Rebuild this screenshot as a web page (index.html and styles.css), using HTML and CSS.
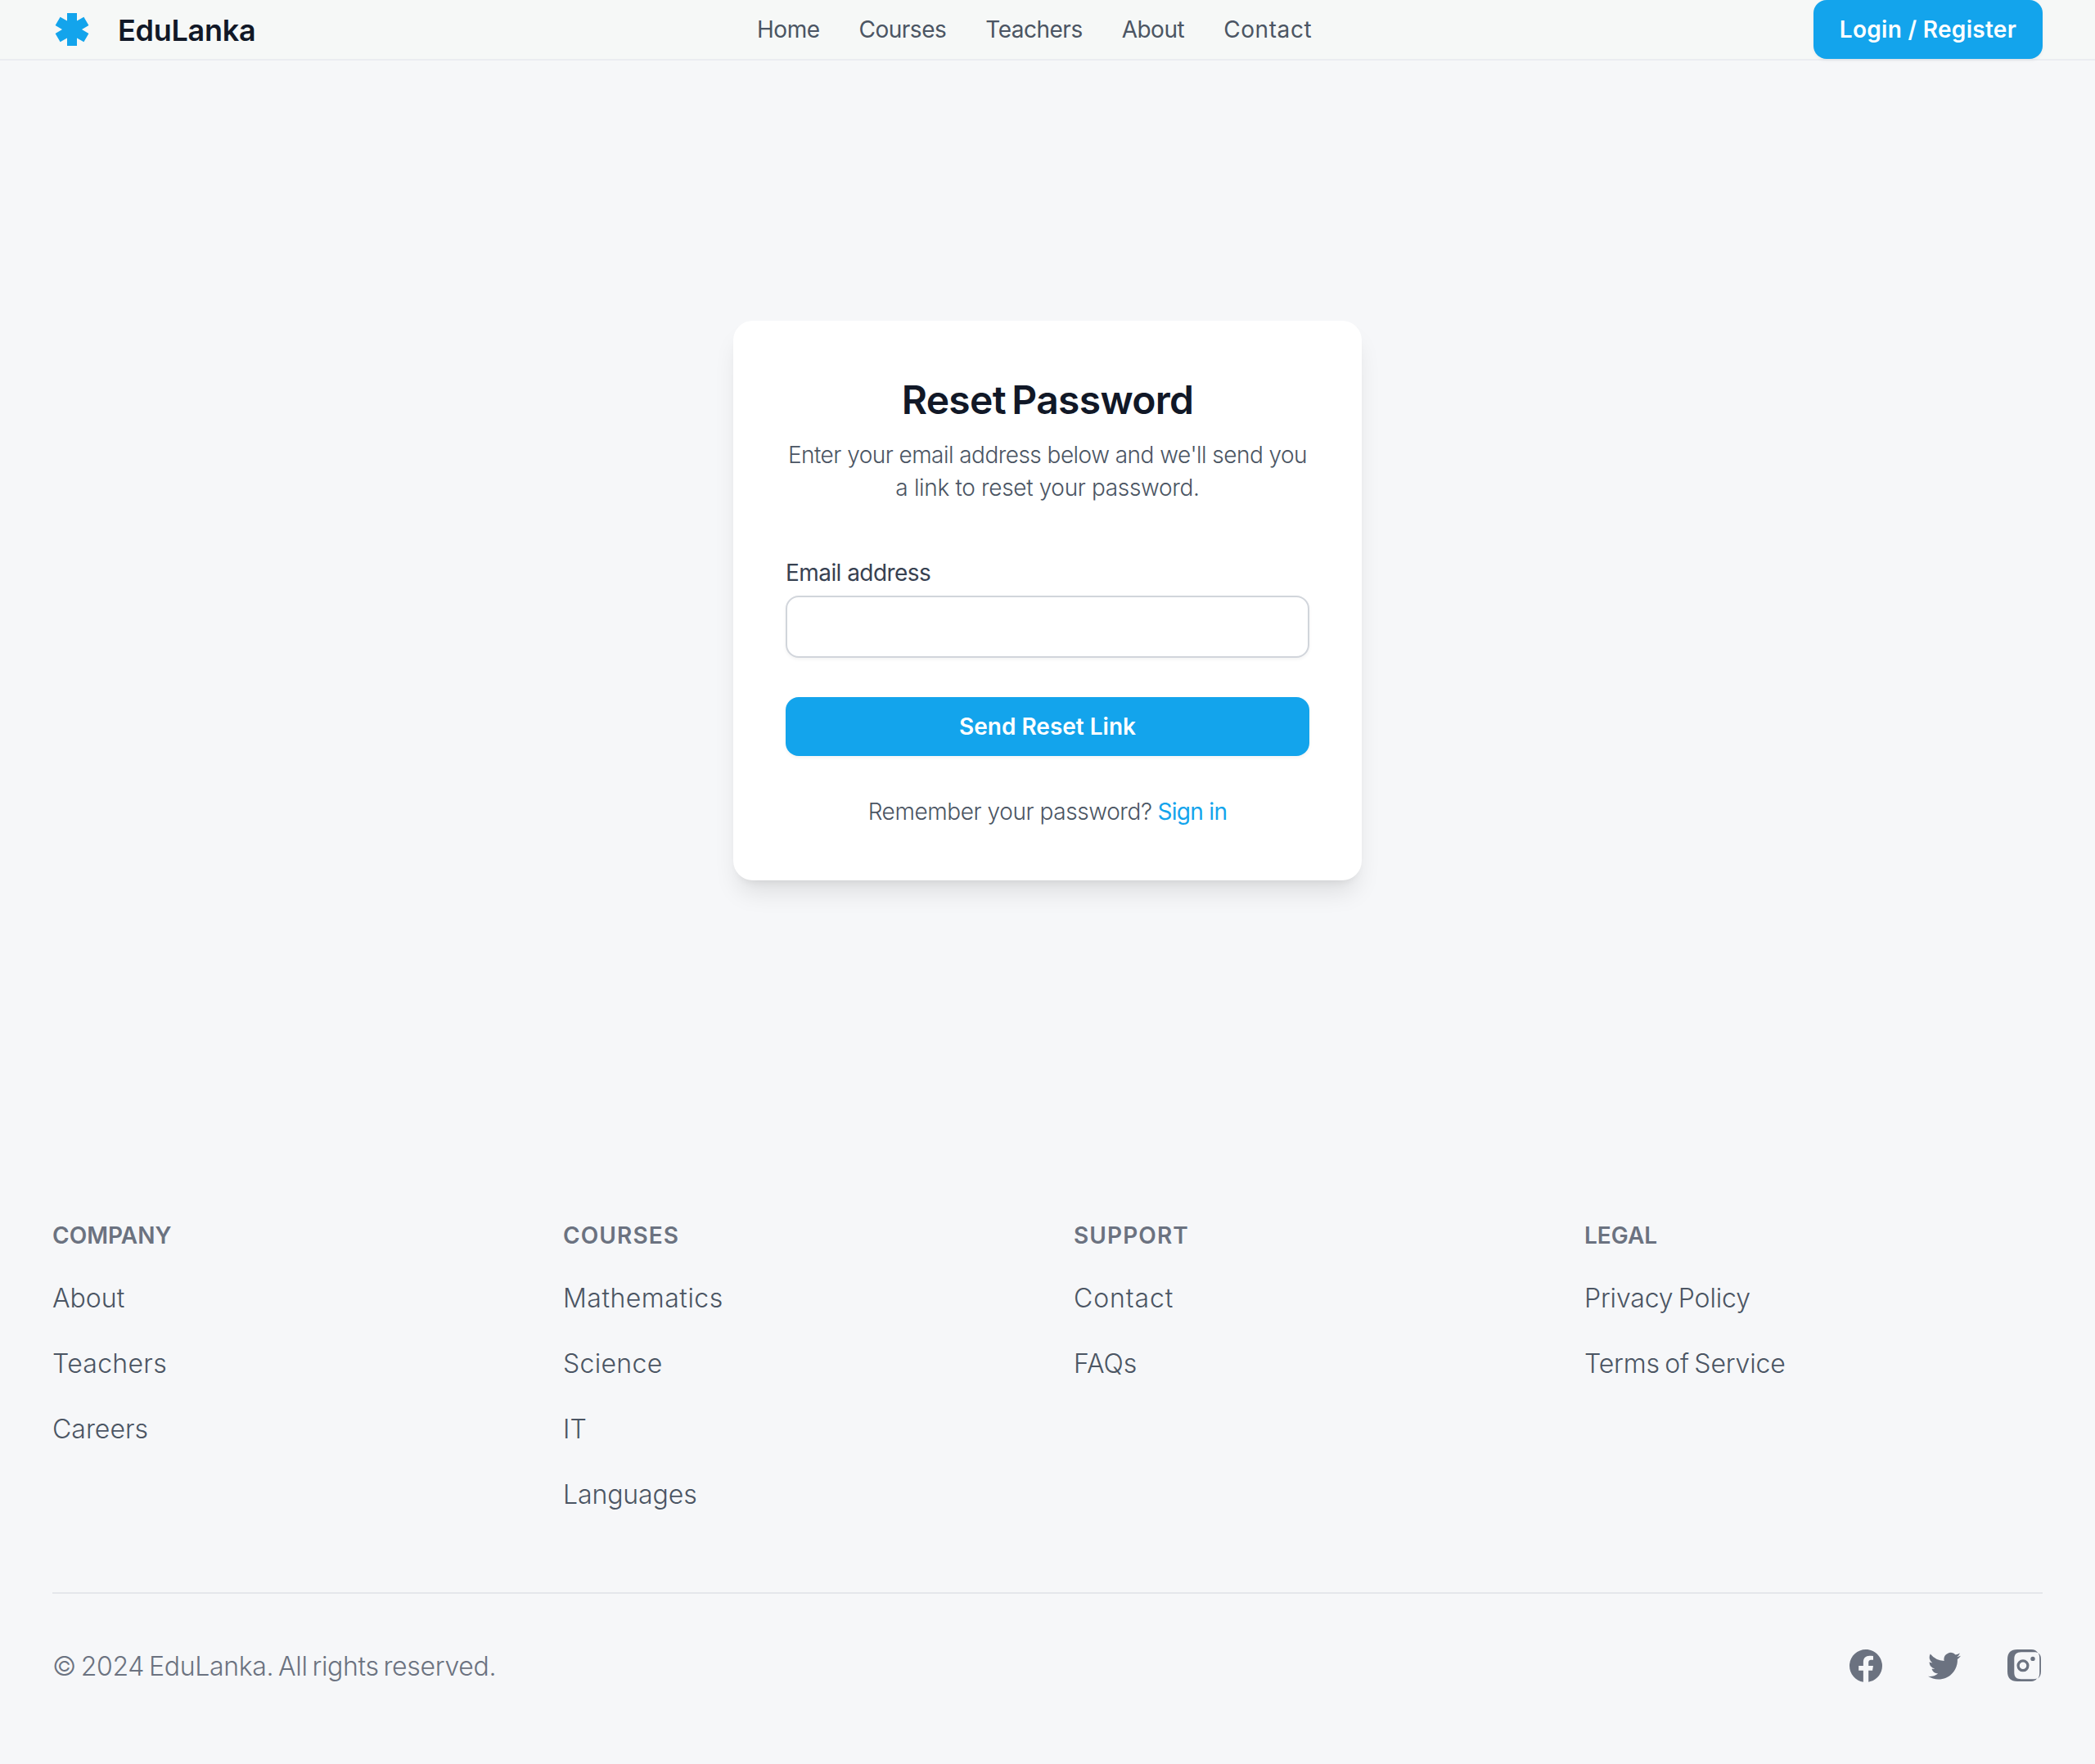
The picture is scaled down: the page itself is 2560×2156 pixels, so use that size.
FILE: index.html
```html
<!DOCTYPE html>
<html lang="en">
<head>
<meta charset="utf-8">
<title>EduLanka - Reset Password</title>
<link rel="stylesheet" href="styles.css">
</head>
<body>
<header class="header">
  <a class="brand" href="#">
    <svg class="icon brand-icon" viewBox="0 0 48 48" fill="currentColor"><path d="M18 4h12v9.600l8.400-4.900 6 10.400L36 24l8.400 4.900-6 10.400L30 34.400V44H18v-9.600l-8.400 4.900-6-10.400L12 24l-8.400-4.900 6-10.400L18 13.600z"/></svg>
    <span class="brand-name">EduLanka</span>
  </a>
  <nav class="nav">
    <a class="tight" href="#">Home</a>
    <a class="tight" href="#">Courses</a>
    <a class="tight" href="#">Teachers</a>
    <a class="tight" href="#">About</a>
    <a class="wide" href="#">Contact</a>
  </nav>
  <a class="button login" href="#">Login / Register</a>
</header>

<main class="main">
  <section class="card">
    <h1 class="title">Reset Password</h1>
    <p class="lead">Enter your email address below and we'll send you <span class="lead-end">a link to reset your password.</span></p>
    <form class="form">
      <label class="label" for="email">Email address</label>
      <input class="input" id="email" type="email">
      <button class="button submit" type="button">Send Reset Link</button>
    </form>
    <p class="signin"><span class="signin-text">Remember your password?</span> <a href="#">Sign in</a></p>
  </section>
</main>

<footer class="footer">
  <div class="columns">
    <div class="column">
      <h3 class="heading heading-company">Company</h3>
      <a href="#">About</a>
      <a class="t-mid" href="#">Teachers</a>
      <a href="#">Careers</a>
    </div>
    <div class="column">
      <h3 class="heading">Courses</h3>
      <a class="t-wide" href="#">Mathematics</a>
      <a class="t-mid" href="#">Science</a>
      <a href="#">IT</a>
      <a class="t-narrow" href="#">Languages</a>
    </div>
    <div class="column">
      <h3 class="heading">Support</h3>
      <a class="t-contact" href="#">Contact</a>
      <a href="#">FAQs</a>
    </div>
    <div class="column">
      <h3 class="heading heading-company">Legal</h3>
      <a class="phrase" href="#">Privacy Policy</a>
      <a class="phrase" href="#">Terms of Service</a>
    </div>
  </div>
  <div class="bottom">
    <p class="copyright">© 2024 EduLanka. All rights reserved.</p>
    <div class="social">
      <a href="#" aria-label="Facebook"><svg class="icon" viewBox="0 0 24 24" fill="currentColor"><path d="M22 12c0-5.523-4.477-10-10-10S2 6.477 2 12c0 4.991 3.657 9.128 8.438 9.878V14.890H7.600V12h2.838V9.797c0-2.506 1.492-3.890 3.777-3.890 1.094 0 2.285.195 2.285.195v2.260h-1.260c-1.243 0-1.630.771-1.630 1.562V12h2.890l-.460 2.890h-2.430v6.988C18.343 21.128 22 16.991 22 12z"/></svg></a>
      <a href="#" aria-label="Twitter"><svg class="icon" viewBox="0 0 24 24" fill="currentColor"><path d="M8.290 20.251c7.547 0 11.675-6.253 11.675-11.675 0-.178 0-.355-.012-.530A8.348 8.348 0 0022 5.920a8.190 8.190 0 01-2.357.646 4.118 4.118 0 001.804-2.270 8.224 8.224 0 01-2.605.996 4.107 4.107 0 00-6.993 3.743 11.650 11.650 0 01-8.457-4.287 4.106 4.106 0 001.270 5.477A8.072 8.072 0 012.800 9.713v.052a4.105 4.105 0 003.292 4.022 4.095 4.095 0 01-1.853.070 4.108 4.108 0 003.834 2.850A8.233 8.233 0 012 18.407a11.616 11.616 0 006.290 1.840"/></svg></a>
      <a href="#" aria-label="Instagram"><svg class="icon" viewBox="0 0 48 48" fill="currentColor"><path fill-rule="evenodd" d="M17 4H34C38 4 40.500 5.500 42.300 8.200C40.500 7.300 38.500 7.300 36 7.300H22C16 7.300 13.300 10 13.300 16V32C13.300 38 16 40.200 22 40.200H36C38.500 40.200 40 40.200 41.200 39.300C39.500 41.800 37 43 34 43H17C9 43 5 39 5 31V16C5 8 9 4 17 4zM42.300 8.200C45 9.800 46 12 46 16V31C46 35 44.500 37.800 41.800 39.800C43.700 37.800 44.200 35.500 44.200 32V16C44.200 12.500 44 10.300 42.300 8.200z"/><circle cx="24" cy="23.800" r="5.900" fill="none" stroke="currentColor" stroke-width="3.300"/><circle cx="36" cy="15.400" r="2.700"/></svg></a>
    </div>
  </div>
</footer>
</body>
</html>
```
FILE: styles.css
```css
* { box-sizing: border-box; margin: 0; padding: 0; }

body {
  min-height: 2156px;
  display: flex;
  flex-direction: column;
  background: #f6f7f9;
  color: #111827;
  font-family: Inter, "Noto Sans", sans-serif;
  font-size: 28px;
  line-height: 40px;
}

a { color: inherit; text-decoration: none; }
.icon { display: block; width: 48px; height: 48px; }

.header {
  height: 74px;
  padding: 0 64px;
  display: flex;
  align-items: center;
  justify-content: space-between;
  background: #f6f8f7;
  border-bottom: 2px solid #ebedf1;
}
.brand { display: flex; align-items: center; gap: 32px; }
.brand-icon { color: #13a4ec; }
.brand-name {
  padding-top: 2px;
  font-size: 36px;
  line-height: 48px;
  font-weight: 600;
  letter-spacing: -0.27px;
}
.nav { display: flex; gap: 48px; color: #4b5563; font-weight: 400; }
.tight { letter-spacing: -0.5px; }
.wide { letter-spacing: 0.6px; }

.button {
  display: flex;
  align-items: center;
  justify-content: center;
  height: 72px;
  border: 0;
  border-radius: 16px;
  background: #13a4ec;
  color: #fff;
  font: 600 28px/40px Inter, "Noto Sans", sans-serif;
  box-shadow: 0 2px 4px rgba(0, 0, 0, 0.05);
}
.login { width: 280px; letter-spacing: 0.3px; }

.main { flex: 1; display: flex; align-items: center; justify-content: center; }
.card {
  width: 768px;
  padding: 64px;
  border-radius: 24px;
  background: #fff;
  box-shadow: 0 20px 30px -6px rgba(0, 0, 0, 0.1), 0 8px 12px -8px rgba(0, 0, 0, 0.1);
}
.title {
  margin-bottom: 14px;
  text-align: center;
  font-size: 48px;
  line-height: 66px;
  font-weight: 600;
  letter-spacing: -0.7px;
  word-spacing: -4px;
}
.lead {
  margin-bottom: 64px;
  text-align: center;
  white-space: nowrap;
  color: #4b5563;
  font-weight: 300;
  letter-spacing: -0.54px;
}
.lead-end { display: block; letter-spacing: -0.34px; }
.form { display: flex; flex-direction: column; }
.label {
  margin-bottom: 8px;
  color: #374151;
  font-weight: 400;
  letter-spacing: -0.56px;
}
.input {
  height: 76px;
  margin-bottom: 48px;
  border: 2px solid #d1d5db;
  border-radius: 16px;
  background: #fff;
  box-shadow: 0 2px 4px rgba(0, 0, 0, 0.05);
}
.submit { width: 100%; margin-bottom: 48px; }
.signin { text-align: center; color: #4b5563; font-weight: 300; }
.signin-text { letter-spacing: -0.42px; }
.signin a { margin-left: -1px; color: #13a4ec; font-weight: 400; letter-spacing: -0.68px; }

.footer { padding: 96px 64px; }
.columns {
  display: grid;
  grid-template-columns: repeat(4, 1fr);
  gap: 64px;
  padding-bottom: 95px;
  border-bottom: 2px solid #e5e7eb;
}
.column {
  display: flex;
  flex-direction: column;
  align-items: flex-start;
  gap: 32px;
  color: #4b5563;
  font-size: 32px;
  line-height: 48px;
  font-weight: 300;
}
.heading {
  margin-bottom: 1px;
  color: #6b7280;
  font-size: 28px;
  line-height: 40px;
  font-weight: 600;
  text-transform: uppercase;
  letter-spacing: 1.1px;
}
.heading-company { letter-spacing: 0; }
.t-narrow { letter-spacing: -0.1px; }
.t-mid { letter-spacing: 0.3px; }
.t-wide { letter-spacing: 0.5px; }
.t-contact { letter-spacing: 0.9px; }
.phrase { letter-spacing: -0.15px; word-spacing: -2.500px; }

.bottom {
  padding-top: 64px;
  display: flex;
  align-items: center;
  justify-content: space-between;
  color: #6b7280;
}
.copyright {
  padding-top: 2px;
  font-size: 32px;
  line-height: 46px;
  font-weight: 300;
  letter-spacing: -0.33px;
  word-spacing: -2.800px;
}
.social { display: flex; gap: 48px; }
```
